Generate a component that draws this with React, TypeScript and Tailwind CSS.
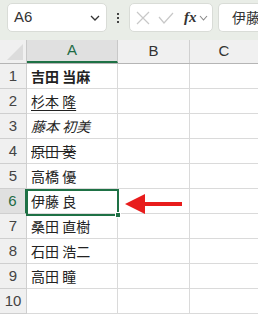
import React from 'react';

const names: { text: string; cls: string }[] = [
  { text: '吉田 当麻', cls: 'font-bold' },
  { text: '杉本 隆', cls: 'underline underline-offset-[3px]' },
  { text: '藤本 初美', cls: 'italic' },
  { text: '原田 葵', cls: 'line-through' },
  { text: '高橋 優', cls: '' },
  { text: '伊藤 良', cls: 'text-[13px]' },
  { text: '桑田 直樹', cls: '' },
  { text: '石田 浩二', cls: '' },
  { text: '高田 瞳', cls: '' },
  { text: '', cls: '' },
];

const App: React.FC = () => {
  return (
    <div className="w-[258px] h-[314px] overflow-hidden bg-white font-['Noto_Sans_CJK_JP','Liberation_Sans',sans-serif] text-[#222]">
      {/* formula bar */}
      <div className="h-10 bg-[#e9ede7] flex items-start pt-[3px] pl-[7px] gap-0">
        <div className="w-[100px] h-[29px] bg-white rounded-[5px] border border-[#d9dcd7] flex items-center justify-between pl-[6px] pr-[6px]">
          <span className="text-[15px] font-['Liberation_Sans',sans-serif] text-[#333]">A6</span>
          <svg width="10" height="6" viewBox="0 0 10 6" fill="none" stroke="#333" strokeWidth="1.3">
            <path d="M1 1l4 4 4-4" />
          </svg>
        </div>
        <div className="w-[22px] h-[29px] flex flex-col items-center justify-center gap-[2px]">
          <span className="w-[2px] h-[2px] bg-[#444]" />
          <span className="w-[2px] h-[2px] bg-[#444]" />
          <span className="w-[2px] h-[2px] bg-[#444]" />
        </div>
        <div className="w-[84px] h-[29px] bg-white rounded-[5px] border border-[#d9dcd7] flex items-center pl-[5px]">
          <svg width="14" height="14" viewBox="0 0 14 14" stroke="#c8c8c8" strokeWidth="1.2" fill="none" className="ml-[1px]">
            <path d="M1 1l12 12M13 1L1 13" />
          </svg>
          <svg width="16" height="12" viewBox="0 0 16 12" stroke="#c8c8c8" strokeWidth="1.2" fill="none" className="ml-[8px]">
            <path d="M1 5l5 6L15 1" />
          </svg>
          <span className="ml-[10px] italic font-bold text-[15px] font-['Liberation_Serif',serif] text-[#333] leading-none">fx</span>
          <svg width="9" height="6" viewBox="0 0 9 6" stroke="#888" strokeWidth="1.1" fill="none" className="ml-[2px]">
            <path d="M1 1l3.5 4L8 1" />
          </svg>
        </div>
        <div className="ml-[5px] flex-1 min-w-0 h-[29px] bg-white rounded-l-[5px] border border-r-0 border-[#d9dcd7] flex items-center pl-[13px] overflow-hidden">
          <span className="text-[14px] text-[#333] whitespace-nowrap">伊藤</span>
        </div>
      </div>

      {/* column headers */}
      <div className="flex h-6 bg-[#f0f0f0] border-b border-[#b5b5b5] font-['Liberation_Sans',sans-serif] text-[15px] text-[#333]">
        <div className="w-[27px] border-r border-[#c8c8c8] relative">
          <div className="absolute right-[3px] bottom-[3px] w-0 h-0 border-l-[16px] border-l-transparent border-b-[16px] border-b-[#dcdcdc]" />
        </div>
        <div className="w-[91px] bg-[#e0e0e0] border-r border-[#c8c8c8] border-b-2 border-b-[#1e7145] flex items-center justify-center text-[#1e6b45]">A</div>
        <div className="w-[72px] border-r border-[#d0d0d0] flex items-center justify-center">B</div>
        <div className="flex-1 flex items-center justify-center">C</div>
      </div>

      {/* rows */}
      <div className="relative">
        {names.map((n, i) => (
          <div key={i} className="flex h-[25px]">
            <div
              className={`w-[27px] border-r border-b border-[#cfcfcf] flex items-center justify-center text-[15px] font-['Liberation_Sans',sans-serif] ${
                i === 5 ? 'bg-[#e0e0e0] text-[#1e6b45] border-r-[#1e7145] border-r-2' : 'bg-[#f0f0f0] text-[#444]'
              }`}
            >
              {i + 1}
            </div>
            <div className="w-[91px] border-r border-b border-[#dadada] flex items-center pl-[4px]">
              <span className={`text-[14px] leading-none whitespace-nowrap ${n.cls}`}>{n.text}</span>
            </div>
            <div className="w-[72px] border-r border-b border-[#dadada]" />
            <div className="flex-1 border-b border-[#dadada]" />
          </div>
        ))}

        {/* selected cell A6 */}
        <div className="absolute left-[26px] top-[125px] w-[93px] h-[27px] border-2 border-[#1e7145] pointer-events-none">
          <div className="absolute -right-[4px] -bottom-[4px] w-[6px] h-[6px] bg-[#1e7145] border border-white" />
        </div>

        {/* arrow */}
        <svg className="absolute left-[125px] top-[129px]" width="58" height="22" viewBox="0 0 58 22">
          <path d="M0 11L20 1V9H57V13H20V21Z" fill="#e81c1c" />
        </svg>
      </div>
    </div>
  );
};

export default App;
